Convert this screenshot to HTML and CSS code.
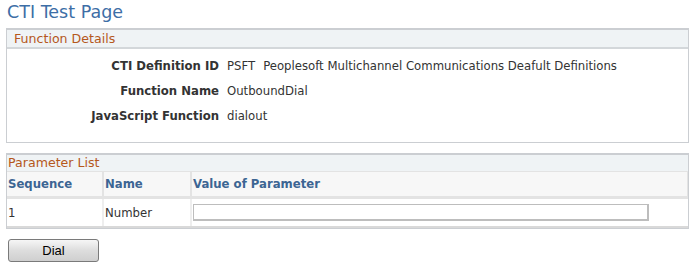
FILE: index.html
```html
<!DOCTYPE html>
<html lang="en">
<head>
<meta charset="UTF-8">
<meta name="viewport" content="width=device-width, initial-scale=1.0">
<title>CTI Test Page</title>
<link rel="stylesheet" href="styles.css">
</head>
<body>
    <h1 class="page-title">CTI Test Page</h1>

    <div class="group-box">
        <div class="group-header">Function Details</div>
        <div class="details">
            <div class="detail-label">CTI Definition ID</div>
            <div class="detail-value"><span class="def-id">PSFT</span>Peoplesoft Multichannel Communications Deafult Definitions</div>
            <div class="detail-label">Function Name</div>
            <div class="detail-value">OutboundDial</div>
            <div class="detail-label">JavaScript Function</div>
            <div class="detail-value">dialout</div>
        </div>
    </div>

    <div class="group-box param-box">
        <div class="group-header param-header">Parameter List</div>
        <table class="param-grid">
            <colgroup>
                <col class="col-seq">
                <col class="col-name">
                <col>
            </colgroup>
            <thead>
                <tr>
                    <th>Sequence</th>
                    <th>Name</th>
                    <th>Value of Parameter</th>
                </tr>
            </thead>
            <tbody>
                <tr>
                    <td>1</td>
                    <td>Number</td>
                    <td><input type="text" class="param-input"></td>
                </tr>
            </tbody>
        </table>
    </div>

    <button class="dial-btn">Dial</button>
</body>
</html>
```

FILE: styles.css
```css
body {
    font-family: "DejaVu Sans", Verdana, sans-serif;
    font-size: 11.7px;
    color: #333;
    background-color: #fff;
    margin: 0;
    padding: 2px 7px 0 6px;
}
.page-title {
    font-size: 17.5px;
    font-weight: normal;
    color: #3d6ea6;
    margin: 0 0 6px 1px;
    line-height: 20px;
}
.group-box {
    width: 681px;
    border: 1px solid #cbced2;
    border-top-width: 2px;
}
.group-header {
    background-color: #eff3f5;
    border-bottom: 2px solid #d3d7da;
    color: #b5581c;
    font-size: 12.6px;
    line-height: 17px;
    padding: 0 0 0 7px;
}
.details {
    display: grid;
    grid-template-columns: 212px auto;
    column-gap: 8px;
    padding: 5px 0 13px 0;
}
.detail-label {
    font-weight: bold;
    text-align: right;
    line-height: 25px;
}
.detail-value {
    line-height: 25px;
}
.def-id {
    margin-right: 8px;
}
.param-box {
    margin-top: 10px;
}
.param-header {
    padding-left: 1px;
    border-bottom: none;
    line-height: 16px;
}
.param-grid {
    width: 100%;
    table-layout: fixed;
    border-collapse: collapse;
}
.col-seq {
    width: 96px;
}
.col-name {
    width: 88px;
}
.param-grid th {
    background-color: #f7f7f7;
    color: #3c6593;
    font-weight: bold;
    text-align: left;
    height: 24px;
    padding: 0 0 0 1px;
    border: 1px solid #e3e3e3;
    border-left-width: 2px;
    border-bottom-width: 3px;
}
.param-grid th:first-child,
.param-grid td:first-child {
    border-left: none;
}
.param-grid td {
    height: 27px;
    padding: 0 0 0 1px;
    border-left: 2px solid #eeeeee;
    border-bottom: 2px solid #d9d9d9;
}
.param-input {
    display: block;
    width: 456px;
    height: 17px;
    box-sizing: border-box;
    border: 2px solid #bdbdbd;
    border-width: 1px 2px 2px 1px;
    padding: 0;
    margin: 0;
}
.dial-btn {
    display: block;
    margin: 10px 0 0 2px;
    width: 91px;
    height: 23px;
    font-family: "Liberation Sans", Arial, sans-serif;
    font-size: 13px;
    color: #000;
    border: 1px solid #7a7a7a;
    border-radius: 3px;
    background: linear-gradient(#f6f6f6, #dddddd 50%, #cfcfcf);
    padding: 0;
}
```
